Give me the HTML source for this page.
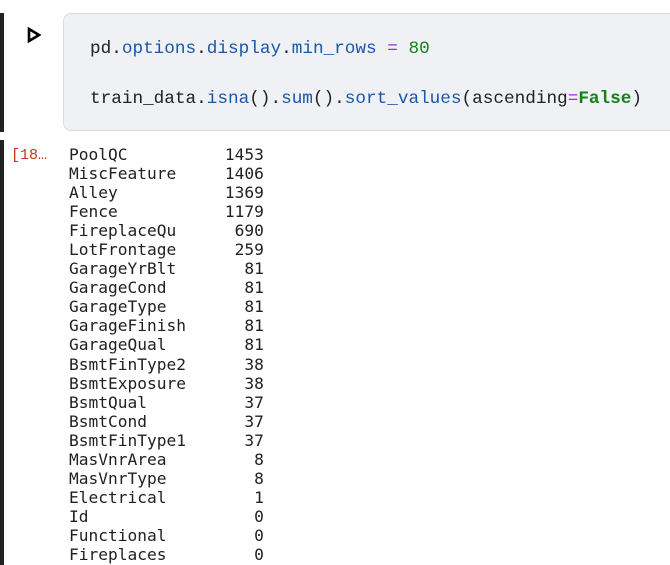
<!DOCTYPE html>
<html><head><style>
body{margin:0;width:670px;height:565px;background:#fff;position:relative;overflow:hidden}
.bar{position:absolute;left:0;width:4px;background:#212121}
.code{position:absolute;left:63px;top:13px;width:640px;height:118px;background:#eff1f4;border:1px solid #dadce0;border-radius:8px;box-sizing:border-box}
.cl{position:absolute;left:90px;font-family:"Liberation Mono",monospace;font-size:17.7px;color:#212121;white-space:pre}
.b{color:#1a56a8}.p{color:#a626e0}.g{color:#16801b}.gb{color:#16801b;font-weight:bold}
pre{position:absolute;left:69px;top:145px;margin:0;font-family:"DejaVu Sans Mono",monospace;font-size:16.2px;line-height:19.05px;color:#212121}
.cnt{position:absolute;left:11px;top:147px;font-family:"Liberation Mono",monospace;font-size:15px;color:#c0391e}
</style></head><body>
<div class="bar" style="top:13px;height:119px"></div>
<div class="bar" style="top:140px;height:425px"></div>
<svg style="position:absolute;left:27px;top:27px" width="14" height="16" viewBox="0 0 14 16"><path d="M2 2 L12 8 L2 14 Z" fill="none" stroke="#000" stroke-width="2.6" stroke-linejoin="miter"/></svg>
<div class="code"></div>
<div class="cl" style="top:39px">pd.<span class="b">options</span>.<span class="b">display</span>.<span class="b">min_rows</span> <span class="p">=</span> <span class="g">80</span></div>
<div class="cl" style="top:89px">train_data.<span class="b">isna</span>().<span class="b">sum</span>().<span class="b">sort_values</span>(ascending<span class="p">=</span><span class="gb">False</span>)</div>
<div class="cnt">[18…</div>
<pre>PoolQC          1453
MiscFeature     1406
Alley           1369
Fence           1179
FireplaceQu      690
LotFrontage      259
GarageYrBlt       81
GarageCond        81
GarageType        81
GarageFinish      81
GarageQual        81
BsmtFinType2      38
BsmtExposure      38
BsmtQual          37
BsmtCond          37
BsmtFinType1      37
MasVnrArea         8
MasVnrType         8
Electrical         1
Id                 0
Functional         0
Fireplaces         0</pre>
</body></html>
